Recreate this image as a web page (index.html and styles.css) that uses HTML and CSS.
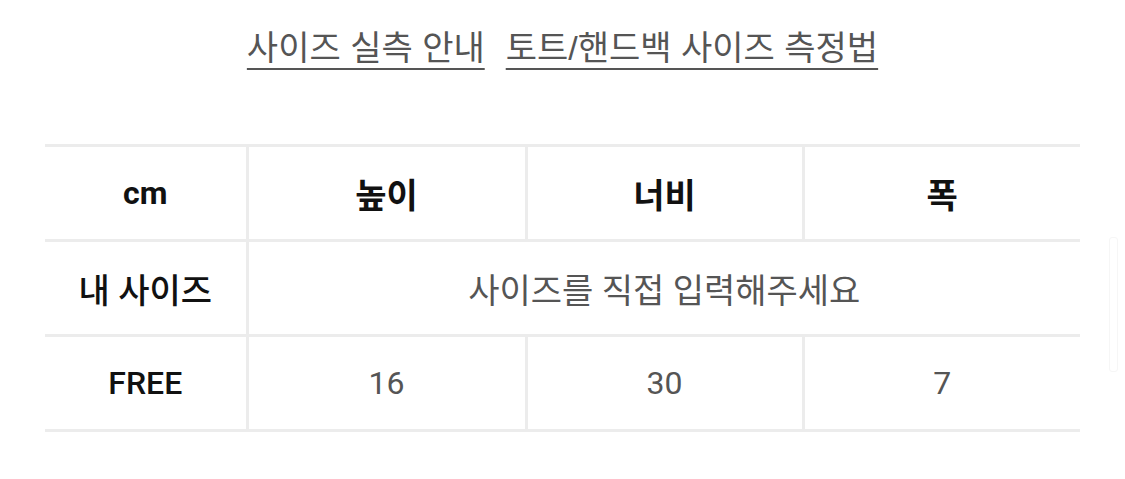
FILE: index.html
```html
<!DOCTYPE html>
<html lang="ko">
<head>
<meta charset="utf-8">
<link rel="stylesheet" href="styles.css">
</head>
<body>
<div class="page">
  <nav class="links">
    <a class="link" href="#">사이즈 실측 안내</a>
    <a class="link" href="#">토트/핸드백 사이즈 측정법</a>
  </nav>
  <table class="size-table">
    <colgroup>
      <col class="c1"><col class="c2"><col class="c3"><col class="c4">
    </colgroup>
    <tr class="head">
      <th class="label en">cm</th>
      <th>높이</th>
      <th>너비</th>
      <th>폭</th>
    </tr>
    <tr>
      <th class="label">내 사이즈</th>
      <td class="input" colspan="3">사이즈를 직접 입력해주세요</td>
    </tr>
    <tr>
      <th class="label en">FREE</th>
      <td class="en">16</td>
      <td class="en">30</td>
      <td class="en">7</td>
    </tr>
  </table>
  <div class="edge"></div>
</div>
</body>
</html>
```

FILE: styles.css
```css
html, body {
  margin: 0;
  padding: 0;
  background: #fff;
}
body {
  font-family: Roboto, "Noto Sans CJK KR", sans-serif;
}
.page {
  position: relative;
  width: 1035px;
  padding: 25px 45px 0;
}
.links {
  display: flex;
  justify-content: center;
  gap: 21px;
  height: 119px;
}
.link {
  font-family: "Liberation Sans", "Noto Sans CJK KR", sans-serif;
  font-size: 34px;
  line-height: 46px;
  color: #555;
  text-decoration: underline;
  text-decoration-thickness: 2px;
  text-underline-offset: 8px;
}
.size-table {
  width: 1035px;
  border-collapse: collapse;
  table-layout: fixed;
}
.c1 { width: 202px; }
.c2 { width: 279px; }
.c3 { width: 277px; }
.c4 { width: 277px; }
.size-table th,
.size-table td {
  height: 92px;
  padding: 0;
  text-align: center;
  vertical-align: middle;
  font-size: 34px;
  border-bottom: 3px solid #ececec;
  border-right: 3px solid #ececec;
}
.size-table tr.head th {
  border-top: 3px solid #ececec;
  color: #111;
  font-weight: 700;
}
.size-table tr > :last-child {
  border-right: none;
}
.size-table th.label {
  color: #111;
  font-weight: 500;
}
.size-table td {
  color: #555;
  font-weight: 400;
}
.size-table .en {
  font-size: 32px;
}
.edge {
  position: absolute;
  left: 1109px;
  top: 237px;
  width: 7px;
  height: 133px;
  border: 1px solid #f6f6f6;
  border-radius: 3px;
}
```
